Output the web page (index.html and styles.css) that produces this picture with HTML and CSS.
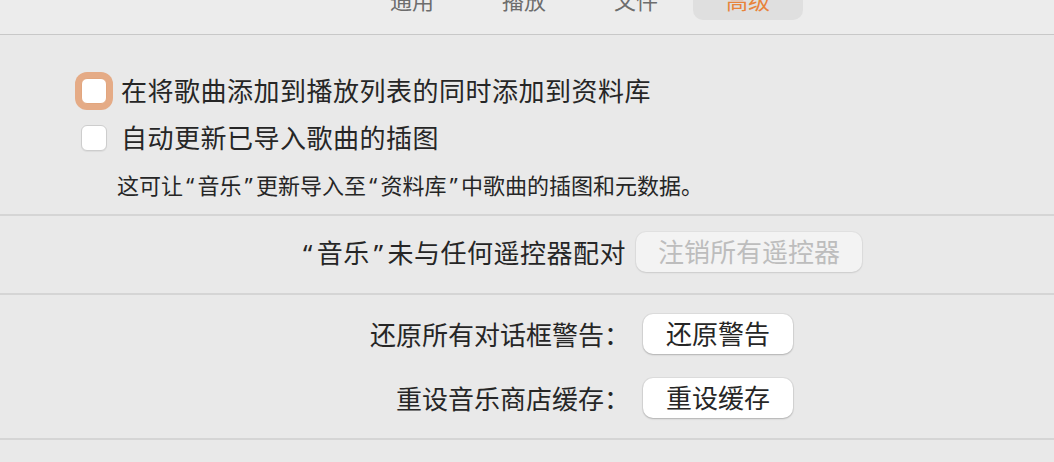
FILE: index.html
```html
<!DOCTYPE html>
<html lang="zh-CN">
<head>
    <meta charset="UTF-8">
    <title>高级</title>
    <link rel="stylesheet" href="styles.css">
</head>
<body>
    <div class="toolbar">
        <nav class="tabs">
            <div class="tab">通用</div>
            <div class="tab">播放</div>
            <div class="tab">文件</div>
            <div class="tab selected">高级</div>
        </nav>
    </div>

    <main class="prefs">
        <section class="group checks">
            <label class="check-row"><span class="checkbox focused"></span>在将歌曲添加到播放列表的同时添加到资料库</label>
            <label class="check-row"><span class="checkbox"></span>自动更新已导入歌曲的插图</label>
            <p class="hint">这可让<span class="q">“</span>音乐<span class="q">”</span>更新导入至<span class="q">“</span>资料库<span class="q">”</span>中歌曲的插图和元数据。</p>
        </section>

        <section class="group remotes">
            <span class="remote-label"><span class="q">“</span>音乐<span class="q">”</span>未与任何遥控器配对</span>
            <button class="btn" disabled>注销所有遥控器</button>
        </section>

        <section class="group resets">
            <span class="field-label">还原所有对话框警告：</span>
            <button class="btn">还原警告</button>
            <span class="field-label">重设音乐商店缓存：</span>
            <button class="btn">重设缓存</button>
        </section>
    </main>
</body>
</html>
```

FILE: styles.css
```css
body {
    margin: 0;
    background: #e9e9e9;
    font-family: "Noto Sans", "Noto Sans CJK SC", sans-serif;
    color: #262626;
    overflow: hidden;
}
.toolbar {
    height: 34px;
    background: #ececec;
    border-bottom: 1px solid #c8c8c8;
    overflow: hidden;
}
.tabs {
    display: flex;
    gap: 2px;
    padding-left: 357px;
    margin-top: -40px;
}
.tab {
    width: 110px;
    height: 60px;
    box-sizing: border-box;
    display: flex;
    align-items: flex-end;
    justify-content: center;
    padding-bottom: 8px;
    font-size: 22px;
    line-height: 24px;
    color: #6d6d6d;
    border-radius: 10px;
}
.tab.selected {
    background: #dfdfdf;
    color: #e8833a;
}
.group + .group {
    border-top: 2px solid #d5d5d5;
}
.group:last-child {
    border-bottom: 2px solid #d5d5d5;
}
/* curly quotes are a bit roomier in the system font */
.q {
    margin: 0 0.15em;
}
/* checkbox block */
.checks {
    padding: 40px 0 16px 81px;
}
.check-row {
    display: flex;
    align-items: center;
    gap: 14px;
    height: 32px;
    font-size: 26px;
    line-height: 32px;
    letter-spacing: 0.5px;
}
.check-row + .check-row {
    margin-top: 15px;
}
.checkbox {
    flex: none;
    width: 26px;
    height: 26px;
    box-sizing: border-box;
    background: #fff;
    border: 1px solid #cdcdcd;
    border-radius: 6px;
    box-shadow: 0 1px 1px rgba(0, 0, 0, 0.06);
}
.checkbox.focused {
    border-color: #e2a67e;
    box-shadow: 0 0 0 6px #e5ab86;
}
.hint {
    margin: 18px 0 0 36px;
    font-size: 22px;
    line-height: 26px;
}
/* buttons */
.btn {
    height: 40px;
    padding: 0 22px;
    font-family: inherit;
    font-size: 26px;
    line-height: 40px;
    color: #262626;
    background: #fff;
    border: none;
    border-radius: 10px;
    box-shadow: 0 0 0 1px rgba(0, 0, 0, 0.05), 0 1px 2px rgba(0, 0, 0, 0.2);
}
.btn:disabled {
    color: #bdbdbd;
    background: #f3f3f3;
    box-shadow: 0 0 0 1px rgba(0, 0, 0, 0.03), 0 1px 2px rgba(0, 0, 0, 0.1);
}
.remotes {
    display: flex;
    align-items: center;
    gap: 10px;
    padding: 16px 0 21px;
}
.remote-label {
    width: 626px;
    text-align: right;
    font-size: 26px;
    letter-spacing: 0.5px;
}
.resets {
    display: grid;
    grid-template-columns: 630px 150px;
    column-gap: 13px;
    row-gap: 24px;
    padding: 19px 0 20px;
}
.field-label {
    align-self: center;
    text-align: right;
    font-size: 26px;
}
```
